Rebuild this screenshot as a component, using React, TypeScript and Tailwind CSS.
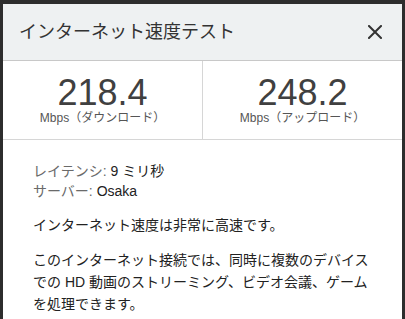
import React from 'react';

const font = { fontFamily: '"Liberation Sans", "Noto Sans CJK JP", sans-serif' };

const Stat: React.FC<{ value: string; label: string; border?: boolean }> = ({ value, label, border }) => (
  <div className={`flex-1 flex flex-col items-center pt-[14px] pb-[14px] ${border ? 'border-r border-[#d6d6d6]' : ''}`}>
    <div className="text-[36px] leading-[36px] text-[#404040]">{value}</div>
    <div className="text-[12px] leading-[14px] text-[#555]">{label}</div>
  </div>
);

const App: React.FC = () => {
  return (
    <div className="w-[405px] h-[319px] bg-[#2d2d2d] pt-[4px] pl-[3px] overflow-hidden" style={font}>
      <div className="w-[399px] h-[315px] bg-white">
        <header className="h-[57px] bg-[#eef1f2] border-b border-[#c8c8c8] flex items-center justify-between pl-[16px] pr-[20px]">
          <h1 className="text-[18px] text-[#333] font-normal">インターネット速度テスト</h1>
          <button className="w-[14px] h-[14px] text-[#333]" aria-label="閉じる">
            <svg viewBox="0 0 14 14" width="14" height="14">
              <path d="M1 1 L13 13 M13 1 L1 13" stroke="currentColor" strokeWidth="2" strokeLinecap="square" />
            </svg>
          </button>
        </header>

        <section className="flex border-b border-[#d6d6d6]">
          <Stat value="218.4" label="Mbps（ダウンロード）" border />
          <Stat value="248.2" label="Mbps（アップロード）" />
        </section>

        <section className="pt-[21px] pl-[30px] pr-[30px] text-[14px] text-[#222]">
          <div className="leading-[20px]">
            <p><span className="text-[#6a6a6a]">レイテンシ:</span> 9 ミリ秒</p>
            <p><span className="text-[#6a6a6a]">サーバー:</span> Osaka</p>
          </div>
          <p className="mt-[13px] leading-[22px]">インターネット速度は非常に高速です。</p>
          <p className="mt-[13px] leading-[22px]">
            このインターネット接続では、同時に複数のデバイスでの HD 動画のストリーミング、ビデオ会議、ゲームを処理できます。
          </p>
        </section>
      </div>
    </div>
  );
};

export default App;
